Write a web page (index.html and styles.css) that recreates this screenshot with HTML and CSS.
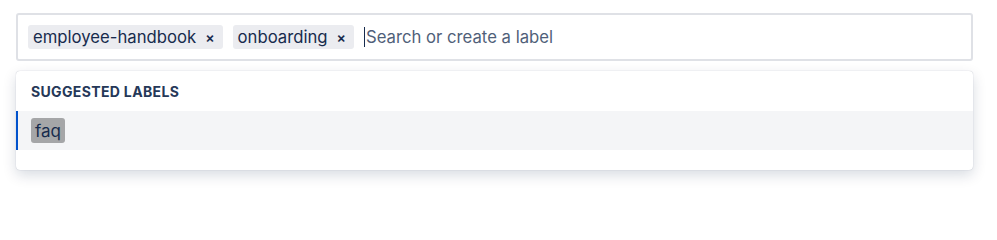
FILE: index.html
```html
<!DOCTYPE html>
<html>
<head>
<meta charset="utf-8">
<link rel="stylesheet" href="styles.css">
</head>
<body>
<div class="wrap">
  <div class="picker">
    <span class="tag">employee-handbook <span class="x">×</span></span>
    <span class="tag">onboarding <span class="x">×</span></span>
    <span class="input"><span class="caret"></span>Search or create a label</span>
  </div>
  <div class="menu">
    <div class="heading">SUGGESTED LABELS</div>
    <div class="option"><span class="chip">faq</span></div>
  </div>
</div>
</body>
</html>
```

FILE: styles.css
```css
html, body { margin: 0; padding: 0; background: #fff; }
body { font-family: Inter, "Noto Sans", sans-serif; color: #172b4d; min-height: 206px; }
.wrap { padding: 13px 24px 30px 16px; }
.picker {
  box-sizing: border-box;
  height: 48px;
  border: 2px solid #dfe1e6;
  border-radius: 3px;
  display: flex;
  align-items: center;
  gap: 10px;
  padding: 0 10px;
  font-size: 16.7px;
}
.tag {
  display: inline-flex;
  align-items: center;
  height: 24px;
  padding: 0 8px 0 5px;
  background: #ebecf0;
  border-radius: 3px;
  white-space: nowrap;
}
.x { font-size: 14px; margin-left: 9px; font-weight: 600; }
.input { display: inline-flex; align-items: center; color: #505f79; }
.caret { width: 1px; height: 20px; background: #172b4d; margin-right: 1px; }
.menu {
  margin-top: 10px;
  background: #fff;
  border-radius: 4px;
  box-shadow: 0 5px 14px rgba(9,30,66,.16), 0 0 1px rgba(9,30,66,.31);
  padding-bottom: 20px;
}
.heading {
  height: 40px;
  display: flex;
  align-items: center;
  padding-left: 15px;
  font-size: 14px;
  font-weight: 700;
  letter-spacing: 0.35px;
  color: #253858;
}
.option {
  height: 39px;
  display: flex;
  align-items: center;
  background: #f4f5f7;
  border-left: 2px solid #0052cc;
  padding-left: 13px;
}
.chip {
  display: inline-flex;
  align-items: center;
  height: 25px;
  padding: 0 4px;
  background: #a5a6a8;
  border-radius: 3px;
  font-size: 17px;
}
```
